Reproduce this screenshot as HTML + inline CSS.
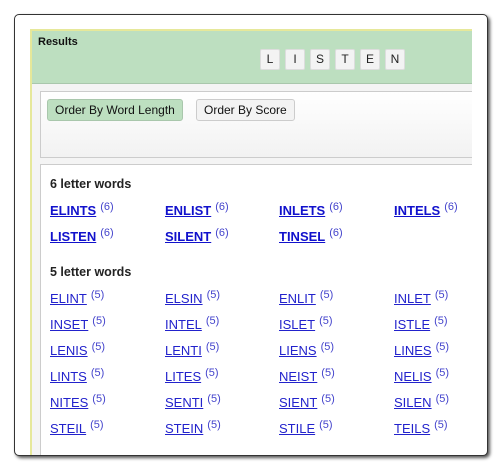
<!DOCTYPE html><html><head><style>
body{margin:0;width:500px;height:467px;background:#fff;position:relative;overflow:hidden;font-family:"Liberation Sans",sans-serif;}
.card{position:absolute;left:14px;top:14px;width:472px;height:440px;border:1px solid #333;border-radius:5px;box-shadow:2px 2px 3px #555;background:#fff;overflow:hidden}
.panel{position:absolute;left:15px;top:14px;width:440px;height:440px;background:#f4f4f4;border-left:2px solid #e6e89a;border-top:2px solid #e6e89a;overflow:hidden}
.hdr{position:absolute;left:0;top:0;width:100%;height:52px;background:#bddfc0;border-bottom:1px solid #a9c7ac}
.hdr b{position:absolute;left:6px;top:5px;font-size:11px;color:#111}
.tile{position:absolute;top:18px;width:18px;height:19px;background:#f3f3f3;border:1px solid #ddd;border-radius:2px;font-size:12px;text-align:center;line-height:19px;color:#222}
.bbox{position:absolute;left:8px;top:60px;width:460px;height:65px;border:1px solid #ccc;background:linear-gradient(#fff,#f2f2f2)}
.btn{position:absolute;top:7px;height:20px;line-height:20px;font-size:12px;border:1px solid #ccc;border-radius:3px;padding:0 7px;color:#111}
.rbox{position:absolute;left:8px;top:133px;width:460px;height:320px;border:1px solid #ccc;background:#fff}
.h{position:absolute;font-size:12.5px;font-weight:bold;color:#222}
a{position:absolute;font-size:13px;color:#22c;text-decoration:underline}
a.b{font-weight:bold;color:#11c}
a sup{font-size:11px;text-decoration:none;display:inline-block;vertical-align:5px;margin-left:4px;color:#44c;font-weight:normal}
</style></head><body>
<div class="card">
<div class="panel">
<div class="hdr"><b>Results</b>
<div class="tile" style="left:228px">L</div><div class="tile" style="left:253px">I</div><div class="tile" style="left:278px">S</div><div class="tile" style="left:303px">T</div><div class="tile" style="left:328px">E</div><div class="tile" style="left:353px">N</div>
</div>
<div class="bbox">
<div class="btn" style="left:6px;background:#bddfc0;border-color:#a9c7ac">Order By Word Length</div>
<div class="btn" style="left:155px;background:#f3f3f3">Order By Score</div>
</div>
<div class="rbox"></div>
</div>
</div>
<div class="h" style="left:50px;top:177px">6 letter words</div>
<a class="b" style="left:50px;top:201px">ELINTS<sup>(6)</sup></a>
<a class="b" style="left:165px;top:201px">ENLIST<sup>(6)</sup></a>
<a class="b" style="left:279px;top:201px">INLETS<sup>(6)</sup></a>
<a class="b" style="left:394px;top:201px">INTELS<sup>(6)</sup></a>
<a class="b" style="left:50px;top:227px">LISTEN<sup>(6)</sup></a>
<a class="b" style="left:165px;top:227px">SILENT<sup>(6)</sup></a>
<a class="b" style="left:279px;top:227px">TINSEL<sup>(6)</sup></a>
<div class="h" style="left:50px;top:265px">5 letter words</div>
<a style="left:50px;top:289px">ELINT<sup>(5)</sup></a><a style="left:165px;top:289px">ELSIN<sup>(5)</sup></a><a style="left:279px;top:289px">ENLIT<sup>(5)</sup></a><a style="left:394px;top:289px">INLET<sup>(5)</sup></a>
<a style="left:50px;top:315px">INSET<sup>(5)</sup></a><a style="left:165px;top:315px">INTEL<sup>(5)</sup></a><a style="left:279px;top:315px">ISLET<sup>(5)</sup></a><a style="left:394px;top:315px">ISTLE<sup>(5)</sup></a>
<a style="left:50px;top:341px">LENIS<sup>(5)</sup></a><a style="left:165px;top:341px">LENTI<sup>(5)</sup></a><a style="left:279px;top:341px">LIENS<sup>(5)</sup></a><a style="left:394px;top:341px">LINES<sup>(5)</sup></a>
<a style="left:50px;top:367px">LINTS<sup>(5)</sup></a><a style="left:165px;top:367px">LITES<sup>(5)</sup></a><a style="left:279px;top:367px">NEIST<sup>(5)</sup></a><a style="left:394px;top:367px">NELIS<sup>(5)</sup></a>
<a style="left:50px;top:393px">NITES<sup>(5)</sup></a><a style="left:165px;top:393px">SENTI<sup>(5)</sup></a><a style="left:279px;top:393px">SIENT<sup>(5)</sup></a><a style="left:394px;top:393px">SILEN<sup>(5)</sup></a>
<a style="left:50px;top:419px">STEIL<sup>(5)</sup></a><a style="left:165px;top:419px">STEIN<sup>(5)</sup></a><a style="left:279px;top:419px">STILE<sup>(5)</sup></a><a style="left:394px;top:419px">TEILS<sup>(5)</sup></a>
</body></html>
